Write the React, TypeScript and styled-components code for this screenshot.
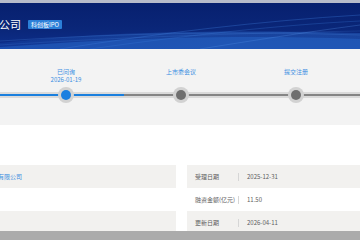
import React from "react";
import styled, { createGlobalStyle } from "styled-components";

const GlobalStyle = createGlobalStyle`
  html, body { margin: 0; padding: 0; background: #ffffff; overflow: hidden; }
  body { font-family: "Noto Sans CJK SC", "Noto Sans", "Liberation Sans", sans-serif; }
`;

const Page = styled.div`
  width: 360px;
  height: 240px;
  overflow: hidden;
  display: flex;
  flex-direction: column;
  background: #ffffff;
`;

const TopStrip = styled.div`
  height: 3px;
  flex: none;
  background: #b7bccb;
`;

const Banner = styled.header`
  position: relative;
  height: 46px;
  flex: none;
  overflow: hidden;
  background: linear-gradient(180deg, #07206f 0%, #0a2678 55%, #0d2f8c 100%);
  display: flex;
  align-items: flex-start;
  padding-top: 14px;
  box-sizing: border-box;
`;

const Waves = styled.svg`
  position: absolute;
  left: 0;
  top: 0;
  width: 360px;
  height: 46px;
`;

const TitleRow = styled.div`
  position: relative;
  display: flex;
  align-items: center;
  gap: 7px;
  margin-left: -45px;
`;

const Title = styled.h1`
  margin: 0;
  font-size: 11px;
  line-height: 14px;
  font-weight: 400;
  color: #ffffff;
  white-space: nowrap;
`;

const Tag = styled.span`
  display: inline-flex;
  align-items: center;
  height: 9px;
  padding: 0 3px;
  border-radius: 1px;
  background: #2b7fd8;
  color: #ffffff;
  font-size: 6px;
  line-height: 9px;
  white-space: nowrap;
`;

const TimelineSection = styled.section`
  height: 76px;
  flex: none;
  background: #f3f3f3;
  overflow: hidden;
`;

const Steps = styled.div`
  display: flex;
  margin-left: -106.5px;
  padding-top: 19px;
`;

const Step = styled.div`
  flex: none;
  width: 115px;
  display: flex;
  flex-direction: column;
  align-items: center;
`;

const StepText = styled.div`
  height: 16px;
  display: flex;
  flex-direction: column;
  align-items: center;
  color: #3a8ee2;
  font-size: 6px;
  line-height: 8px;
  white-space: nowrap;
`;

const NodeRow = styled.div<{ $done: boolean }>`
  position: relative;
  width: 100%;
  height: 16px;
  margin-top: 3px;
  display: flex;
  align-items: center;
  justify-content: center;

  &::before {
    content: "";
    position: absolute;
    left: 0;
    right: 0;
    top: 5px;
    height: 6px;
    background: #dadada;
  }
  &::after {
    content: "";
    position: absolute;
    left: 0;
    right: 0;
    top: 7px;
    height: 2px;
    background: ${(p) => (p.$done ? "#1a7fde" : "#858585")};
  }
`;

const Node = styled.span<{ $done: boolean }>`
  position: relative;
  z-index: 1;
  width: 10px;
  height: 10px;
  border-radius: 50%;
  background: ${(p) => (p.$done ? "#1b7fe0" : "#6f6f6f")};
  box-shadow: 0 0 0 3px #d2d2d2;
`;

const Spacer = styled.div`
  height: 40px;
  flex: none;
  background: #ffffff;
`;

const Tables = styled.div`
  height: 66px;
  flex: none;
  display: flex;
  gap: 11px;
  overflow: hidden;
`;

const LeftTable = styled.div`
  flex: none;
  width: 266px;
  margin-left: -90px;
  display: flex;
  flex-direction: column;
`;

const RightTable = styled.div`
  flex: none;
  width: 240px;
  display: flex;
  flex-direction: column;
`;

const Row = styled.div<{ $shade: boolean }>`
  flex: none;
  height: 23px;
  display: flex;
  align-items: center;
  background: ${(p) => (p.$shade ? "#f2f1ef" : "#ffffff")};
  font-size: 6px;
  line-height: 8px;
  color: #5e5e5e;
  white-space: nowrap;
`;

const Label = styled.div<{ $w: number }>`
  flex: none;
  width: ${(p) => p.$w}px;
  box-sizing: border-box;
  padding-left: 8px;
  border-right: 1px solid #d6d6d6;
  height: 8px;
  display: flex;
  align-items: center;
`;

const Value = styled.div<{ $link?: boolean }>`
  padding-left: 8px;
  color: ${(p) => (p.$link ? "#3b8de0" : "#5e5e5e")};
`;

const Footer = styled.div`
  flex: 1;
  background: #ababab;
`;

const steps = [
  { label: "已受理", date: "2025-12-31", done: true },
  { label: "已问询", date: "2026-01-19", done: true },
  { label: "上市委会议", date: "", done: false },
  { label: "提交注册", date: "", done: false },
  { label: "注册生效", date: "", done: false },
];

export default function App() {
  return (
    <Page>
      <GlobalStyle />
      <TopStrip />
      <Banner>
        <Waves viewBox="0 0 360 46" preserveAspectRatio="none">
          <defs>
            <linearGradient id="wv" x1="0" y1="0" x2="1" y2="0">
              <stop offset="0" stopColor="#1d55b8" stopOpacity="0.5" />
              <stop offset="0.6" stopColor="#2a67c8" stopOpacity="0.8" />
              <stop offset="1" stopColor="#2f6fd0" stopOpacity="0.7" />
            </linearGradient>
          </defs>
          <path d="M0 40 C90 30 200 26 360 30 L360 46 L0 46 Z" fill="url(#wv)" opacity="0.55" />
          <path d="M0 44 C110 36 220 31 360 36 L360 46 L0 46 Z" fill="#2461c2" opacity="0.6" />
          <path d="M60 46 C160 30 260 18 360 12" stroke="#3a78d8" strokeWidth="0.6" fill="none" opacity="0.6" />
          <path d="M90 46 C190 32 280 22 360 18" stroke="#3a78d8" strokeWidth="0.6" fill="none" opacity="0.5" />
          <path d="M0 38 C120 30 240 28 360 32" stroke="#4a86e0" strokeWidth="0.5" fill="none" opacity="0.5" />
          <path d="M0 42 C120 34 250 30 360 28" stroke="#4a86e0" strokeWidth="0.5" fill="none" opacity="0.4" />
          <path d="M200 46 C250 38 300 30 360 22" stroke="#5590e6" strokeWidth="0.6" fill="none" opacity="0.5" />
        </Waves>
        <TitleRow>
          <Title>股份有限公司</Title>
          <Tag>科创板IPO</Tag>
        </TitleRow>
      </Banner>
      <TimelineSection>
        <Steps>
          {steps.map((s, i) => (
            <Step key={i}>
              <StepText>
                <span>{s.label}</span>
                {s.date && <span>{s.date}</span>}
              </StepText>
              <NodeRow $done={s.done}>
                <Node $done={s.done} />
              </NodeRow>
            </Step>
          ))}
        </Steps>
      </TimelineSection>
      <Spacer />
      <Tables>
        <LeftTable>
          <Row $shade>
            <Label $w={56}>公司全称</Label>
            <Value $link>科技股份有限公司</Value>
          </Row>
          <Row $shade={false}>
            <Label $w={56}>审核状态</Label>
            <Value>否</Value>
          </Row>
          <Row $shade>
            <Label $w={56}>所属行业</Label>
            <Value>C39</Value>
          </Row>
        </LeftTable>
        <RightTable>
          <Row $shade>
            <Label $w={52}>受理日期</Label>
            <Value>2025-12-31</Value>
          </Row>
          <Row $shade={false}>
            <Label $w={52}>融资金额(亿元)</Label>
            <Value>11.50</Value>
          </Row>
          <Row $shade>
            <Label $w={52}>更新日期</Label>
            <Value>2026-04-11</Value>
          </Row>
        </RightTable>
      </Tables>
      <Footer />
    </Page>
  );
}
